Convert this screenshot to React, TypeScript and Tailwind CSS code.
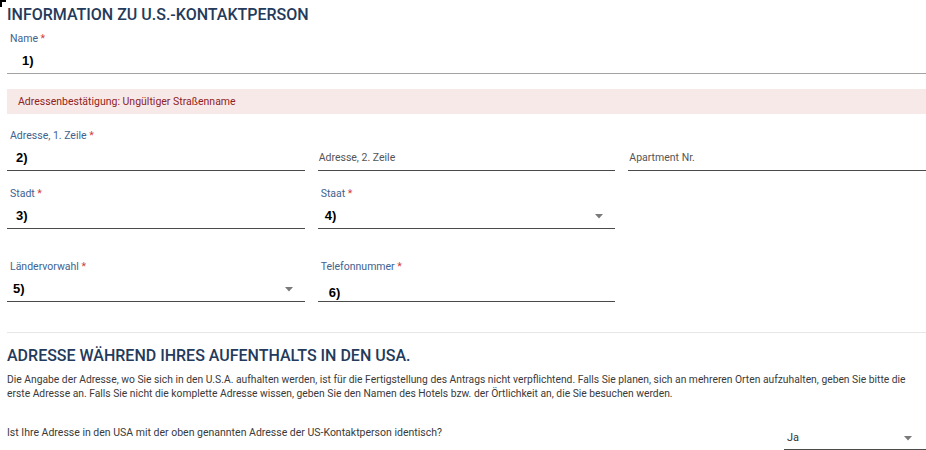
import React from "react";

type FieldProps = {
  label?: string;
  required?: boolean;
  value?: string;
  placeholder?: string;
  select?: boolean;
  valueClass?: string;
  lineClass?: string;
};

function Caret({ className = "" }: { className?: string }) {
  return (
    <svg width="8" height="5" viewBox="0 0 8 5" className={className}>
      <path d="M0 0h8L4 4.5z" fill="#7a7a7a" />
    </svg>
  );
}

function Field({ label, required, value, placeholder, select, valueClass = "pl-[9px]", lineClass = "border-[#4a4a4a]" }: FieldProps) {
  return (
    <div>
      <div className="h-[14px] pl-[3px] text-[10.5px] leading-[14px] text-[#41628f]">
        {label}
        {required && <span className="text-[#d33a3a]"> *</span>}
      </div>
      <div className={`flex h-[28px] items-end justify-between border-b pb-[4px] pr-[12px] ${lineClass}`}>
        {value ? (
          <span className={`font-['Liberation_Sans',Arial,sans-serif] text-[13px] font-bold leading-[16px] text-black ${valueClass}`}>
            {value}
          </span>
        ) : (
          <span className="pl-[1px] text-[10.5px] leading-[16px] text-[#555]">{placeholder}</span>
        )}
        {select && <Caret className="mb-[5px]" />}
      </div>
    </div>
  );
}

export default function App() {
  return (
    <div className="relative h-[450px] w-[926px] overflow-hidden bg-white pl-[7px] font-['Roboto','Noto_Sans',sans-serif]">
      {/* crop mark */}
      <div className="absolute left-0 top-0 h-[2px] w-[6px] bg-black" />
      <div className="absolute left-0 top-0 h-[7px] w-[2px] bg-black" />

      <h2 className="pt-[5px] text-[16px] font-medium leading-[20px] text-[#243a5a]">
        INFORMATION ZU U.S.-KONTAKTPERSON
      </h2>

      <div className="mt-[7px]">
        <Field label="Name" required value="1)" valueClass="pl-[15px]" lineClass="border-[#a3a3a3]" />
      </div>

      <div className="mt-[15px] flex h-[25px] items-center bg-[#f8e9e9] pl-[11px] text-[10.5px] text-[#8e2323]">
        Adressenbestätigung: Ungültiger Straßenname
      </div>

      <div className="mt-[15px] grid grid-cols-3 gap-x-[13px]">
        <Field label="Adresse, 1. Zeile" required value="2)" />
        <Field placeholder="Adresse, 2. Zeile" />
        <Field placeholder="Apartment Nr." />
      </div>

      <div className="mt-[16px] grid grid-cols-3 gap-x-[13px]">
        <Field label="Stadt" required value="3)" />
        <Field label="Staat" required value="4)" valueClass="pl-[7px]" select />
      </div>

      <div className="mt-[31px] grid grid-cols-3 gap-x-[13px]">
        <Field label="Ländervorwahl" required value="5)" valueClass="pl-[6px]" select />
        <Field label="Telefonnummer" required value="6)" valueClass="pl-[11px] -mb-[4px]" />
      </div>

      <div className="mt-[30px] border-t border-[#e6e6e6]" />

      <h2 className="mt-[13px] text-[16px] font-medium leading-[20px] text-[#243a5a]">
        ADRESSE WÄHREND IHRES AUFENTHALTS IN DEN USA.
      </h2>

      <p className="mt-[7px] text-[10.3px] leading-[14px] text-[#3a3a3a]">
        Die Angabe der Adresse, wo Sie sich in den U.S.A. aufhalten werden, ist für die Fertigstellung des Antrags nicht verpflichtend. Falls Sie planen, sich an mehreren Orten aufzuhalten, geben Sie bitte die erste Adresse an. Falls Sie nicht die komplette Adresse wissen, geben Sie den Namen des Hotels bzw. der Örtlichkeit an, die Sie besuchen werden.
      </p>

      <div className="mt-[21px] flex items-start justify-between">
        <span className="mt-[4px] text-[10.5px] leading-[14px] text-[#3a3a3a]">
          Ist Ihre Adresse in den USA mit der oben genannten Adresse der US-Kontaktperson identisch?
        </span>
        <div className="flex h-[28px] w-[142px] items-end justify-between border-b border-[#4a4a4a] pb-[3px] pl-[3px] pr-[14px]">
          <span className="text-[11px] leading-[16px] text-[#333]">Ja</span>
          <Caret className="mb-[5px]" />
        </div>
      </div>
    </div>
  );
}
